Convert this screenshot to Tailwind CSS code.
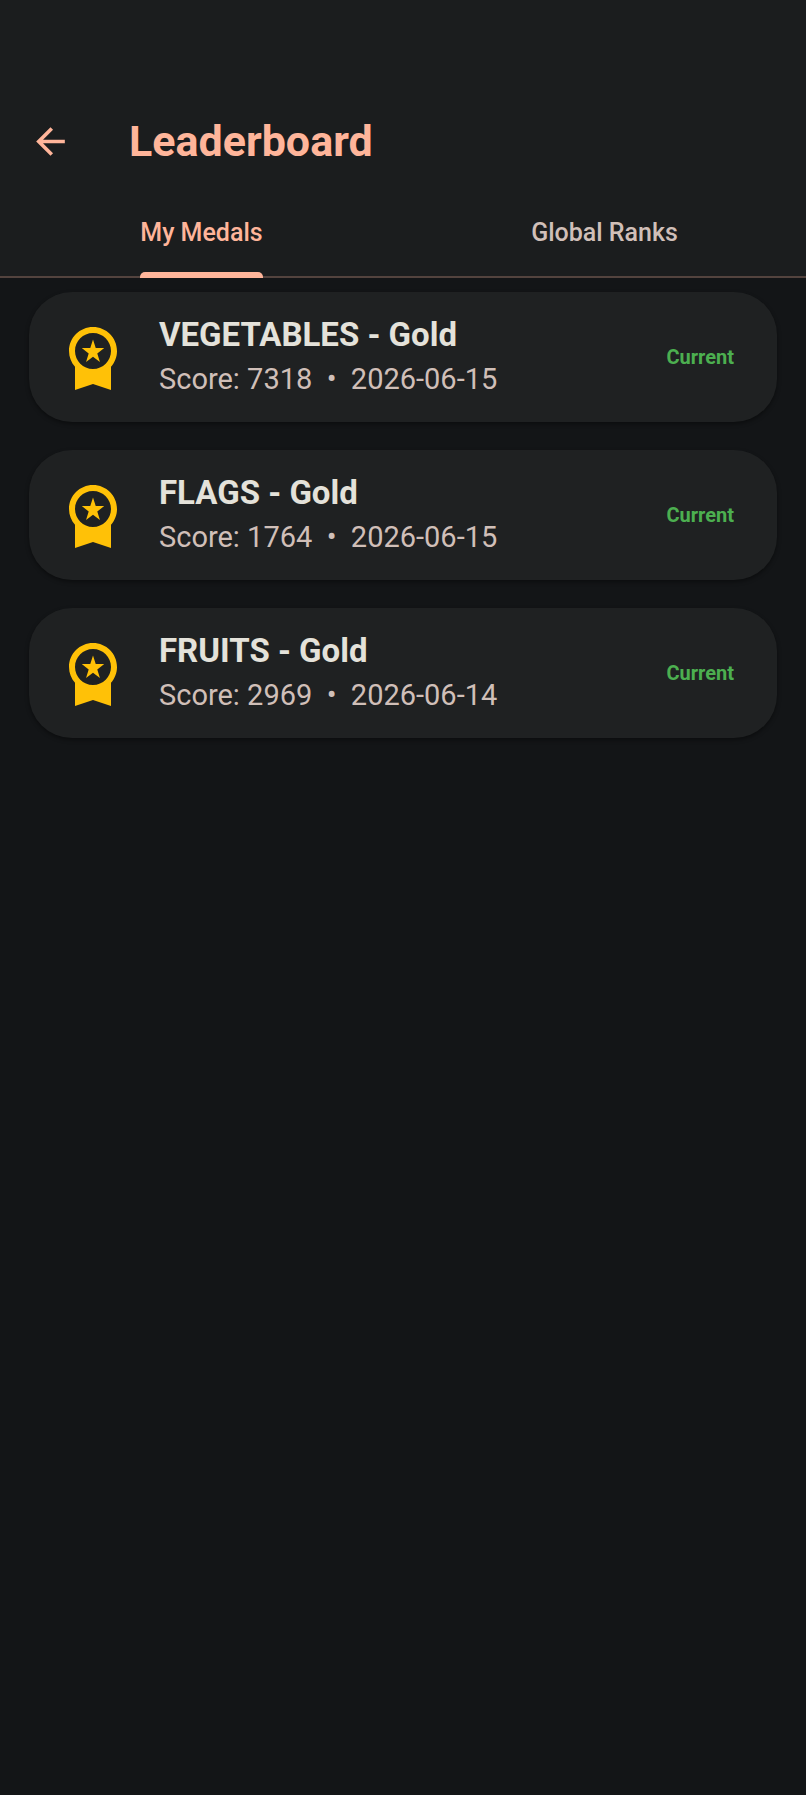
<!DOCTYPE html>
<html lang="en">
<head>
  <meta charset="UTF-8" />
  <meta name="viewport" content="width=device-width, initial-scale=1.0"/>
  <title>Leaderboard</title>
  <script src="https://cdn.jsdelivr.net/npm/@tailwindcss/browser@4"></script>
</head>
<body class="min-h-screen bg-[#131517] text-[#e4e2da] font-[Roboto,sans-serif]">

  <!-- App bar -->
  <header class="bg-[#1b1d1e] pt-[90px]">
    <div class="flex items-center h-[102px] px-[15px]">
      <button type="button" aria-label="Back" class="flex items-center justify-center size-[70px] text-[#ffb59a]">
        <svg class="size-[43px]" viewBox="0 0 24 24" fill="currentColor"><path d="M20 11H7.83l5.59-5.59L12 4l-8 8 8 8 1.41-1.41L7.83 13H20v-2z"/></svg>
      </button>
      <h1 class="ml-11 text-[43px] leading-[52px] font-bold text-[#ffb59a]">Leaderboard</h1>
    </div>

    <!-- Tabs -->
    <nav class="grid grid-cols-2 h-[86px] border-b-2 border-[#53433e] text-[25px] leading-9 font-medium">
      <a href="#medals" aria-current="page" class="relative flex items-center justify-self-center -mb-[2px] pb-[4px] text-[#ffb59a]">
        My Medals
        <span class="absolute inset-x-0 bottom-0 h-[6px] rounded-t-[5px] bg-[#ffb59a]"></span>
      </a>
      <a href="#ranks" class="flex items-center justify-self-center -mb-[2px] pb-[4px] text-[#d0bfb8]">Global Ranks</a>
    </nav>
  </header>

  <!-- Medal list -->
  <main id="medals">
    <ul class="flex flex-col gap-7 px-[29px] py-[14px]">
      <li class="flex items-center gap-[30px] min-h-[130px] pl-7 pr-[43px] rounded-[43px] bg-[#1f2122] shadow-[0_2px_4px_rgba(0,0,0,0.4)]">
        <svg class="size-[72px] shrink-0 text-[#ffc107]" viewBox="0 0 24 24" fill="currentColor"><path d="M9.68 13.69 12 11.93l2.31 1.76-.88-2.85L15.75 9h-2.84L12 6.19 11.09 9H8.25l2.31 1.84-.88 2.85zM20 10c0-4.42-3.58-8-8-8s-8 3.58-8 8c0 2.03.76 3.87 2 5.28V23l6-2 6 2v-7.72c1.24-1.41 2-3.25 2-5.28zm-8-6c3.31 0 6 2.69 6 6s-2.69 6-6 6-6-2.69-6-6 2.69-6 6-6z"/></svg>
        <div class="flex-1">
          <h2 class="text-[33px] leading-[44px] font-bold">VEGETABLES - Gold</h2>
          <p class="text-[29px] leading-[44px] text-[#d0bfb8] whitespace-pre">Score: 7318  •  2026-06-15</p>
        </div>
        <span class="text-[20px] leading-7 font-bold text-[#4caf50]">Current</span>
      </li>
      <li class="flex items-center gap-[30px] min-h-[130px] pl-7 pr-[43px] rounded-[43px] bg-[#1f2122] shadow-[0_2px_4px_rgba(0,0,0,0.4)]">
        <svg class="size-[72px] shrink-0 text-[#ffc107]" viewBox="0 0 24 24" fill="currentColor"><path d="M9.68 13.69 12 11.93l2.31 1.76-.88-2.85L15.75 9h-2.84L12 6.19 11.09 9H8.25l2.31 1.84-.88 2.85zM20 10c0-4.42-3.58-8-8-8s-8 3.58-8 8c0 2.03.76 3.87 2 5.28V23l6-2 6 2v-7.72c1.24-1.41 2-3.25 2-5.28zm-8-6c3.31 0 6 2.69 6 6s-2.69 6-6 6-6-2.69-6-6 2.69-6 6-6z"/></svg>
        <div class="flex-1">
          <h2 class="text-[33px] leading-[44px] font-bold">FLAGS - Gold</h2>
          <p class="text-[29px] leading-[44px] text-[#d0bfb8] whitespace-pre">Score: 1764  •  2026-06-15</p>
        </div>
        <span class="text-[20px] leading-7 font-bold text-[#4caf50]">Current</span>
      </li>
      <li class="flex items-center gap-[30px] min-h-[130px] pl-7 pr-[43px] rounded-[43px] bg-[#1f2122] shadow-[0_2px_4px_rgba(0,0,0,0.4)]">
        <svg class="size-[72px] shrink-0 text-[#ffc107]" viewBox="0 0 24 24" fill="currentColor"><path d="M9.68 13.69 12 11.93l2.31 1.76-.88-2.85L15.75 9h-2.84L12 6.19 11.09 9H8.25l2.31 1.84-.88 2.85zM20 10c0-4.42-3.58-8-8-8s-8 3.58-8 8c0 2.03.76 3.87 2 5.28V23l6-2 6 2v-7.72c1.24-1.41 2-3.25 2-5.28zm-8-6c3.31 0 6 2.69 6 6s-2.69 6-6 6-6-2.69-6-6 2.69-6 6-6z"/></svg>
        <div class="flex-1">
          <h2 class="text-[33px] leading-[44px] font-bold">FRUITS - Gold</h2>
          <p class="text-[29px] leading-[44px] text-[#d0bfb8] whitespace-pre">Score: 2969  •  2026-06-14</p>
        </div>
        <span class="text-[20px] leading-7 font-bold text-[#4caf50]">Current</span>
      </li>
    </ul>
  </main>

</body>
</html>
